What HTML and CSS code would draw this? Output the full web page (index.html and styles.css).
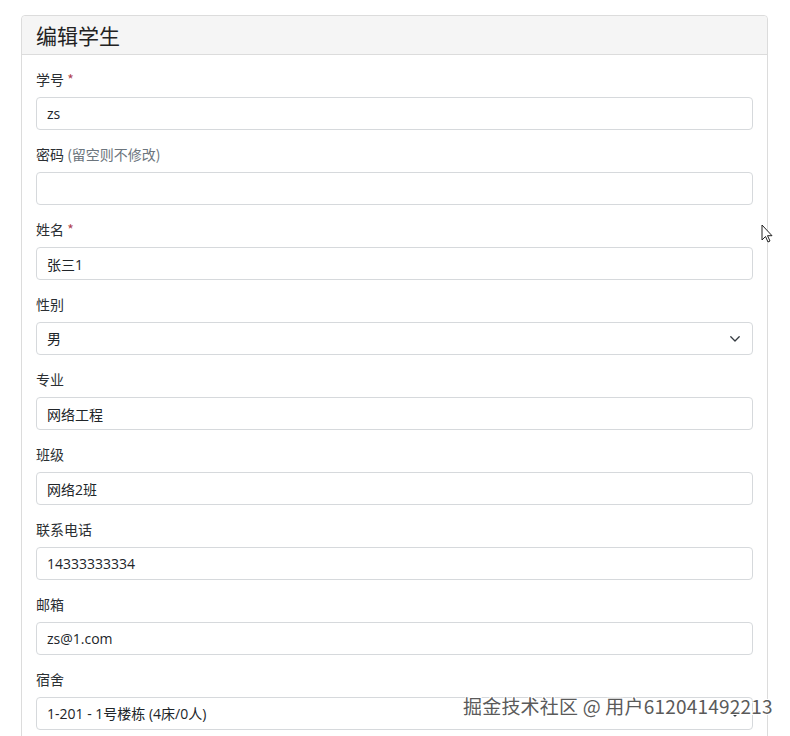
FILE: index.html
```html
<!DOCTYPE html>
<html lang="zh-CN">
<head>
<meta charset="utf-8">
<title>编辑学生</title>
<link rel="stylesheet" href="styles.css">
</head>
<body>
<div class="page">
  <div class="card">
    <div class="card-header"><h4 class="title">编辑学生</h4></div>
    <div class="card-body">
      <div class="group">
        <label class="label">学号 <span class="req">*</span></label>
        <input class="control" type="text" value="zs">
      </div>
      <div class="group">
        <label class="label">密码 <span class="muted">(留空则不修改)</span></label>
        <input class="control" type="password" value="">
      </div>
      <div class="group">
        <label class="label">姓名 <span class="req">*</span></label>
        <input class="control" type="text" value="张三1">
      </div>
      <div class="group">
        <label class="label">性别</label>
        <div class="select-wrap">
          <div class="control select">男</div>
          <svg class="chevron" viewBox="0 0 10 6" width="10" height="6"><path d="M0.8 0.8L5 5 9.2 0.8" fill="none" stroke="#343a40" stroke-width="1.3" stroke-linecap="round" stroke-linejoin="round"/></svg>
        </div>
      </div>
      <div class="group">
        <label class="label">专业</label>
        <input class="control" type="text" value="网络工程">
      </div>
      <div class="group">
        <label class="label">班级</label>
        <input class="control" type="text" value="网络2班">
      </div>
      <div class="group">
        <label class="label">联系电话</label>
        <input class="control" type="text" value="14333333334">
      </div>
      <div class="group">
        <label class="label">邮箱</label>
        <input class="control" type="text" value="zs@1.com">
      </div>
      <div class="group">
        <label class="label">宿舍</label>
        <div class="select-wrap">
          <div class="control select">1-201 - 1号楼栋 (4床/0人)</div>
          <svg class="chevron" viewBox="0 0 10 6" width="10" height="6"><path d="M0.8 0.8L5 5 9.2 0.8" fill="none" stroke="#343a40" stroke-width="1.3" stroke-linecap="round" stroke-linejoin="round"/></svg>
        </div>
      </div>
    </div>
  </div>
  <svg class="cursor" viewBox="0 0 12 19" width="12" height="19"><path d="M1 1v15l3.5-3.5 2.5 5.5 2-1-2.5-5.3H11z" fill="#fff" stroke="#222" stroke-width="1" stroke-linejoin="round"/></svg>
  <div class="watermark">掘金技术社区 @ 用户612041492213</div>
</div>
</body>
</html>
```
FILE: styles.css
```css
html, body {
  margin: 0;
  padding: 0;
  background: #fff;
}
body {
  font-family: "Segoe UI", "Open Sans", "Noto Sans CJK SC", sans-serif;
  font-size: 14px;
  color: #212529;
  overflow: hidden;
  height: 736px;
}
.page {
  position: relative;
  padding: 15px 0 0 21px;
  height: 721px;
}
.card {
  width: 745px;
  border: 1px solid #dcdcdc;
  border-radius: 4px;
  background: #fff;
}
.card-header {
  height: 38px;
  background: #f5f5f5;
  border-bottom: 1px solid #dcdcdc;
  border-radius: 4px 4px 0 0;
  padding: 0 14px;
  display: flex;
  align-items: center;
}
.title {
  margin: 0;
  font-size: 21px;
  font-weight: 400;
  color: #222;
  font-family: "Noto Sans CJK SC", sans-serif;
  line-height: 1;
}
.card-body {
  padding: 14px 14px 0 14px;
}
.group {
  margin-bottom: 14px;
}
.label {
  display: block;
  height: 21px;
  line-height: 21px;
  margin-bottom: 7px;
  font-family: "Noto Sans CJK SC", sans-serif;
  font-size: 14px;
  color: #2b2f33;
}
.req {
  color: #b0434f;
}
.muted {
  color: #6c757d;
}
.control {
  display: block;
  box-sizing: border-box;
  width: 717px;
  height: 33px;
  margin: 0;
  padding: 0 10px;
  border: 1px solid #d6d9dc;
  border-radius: 4px;
  background: #fff;
  font-family: "Segoe UI", "Open Sans", "Noto Sans CJK SC", sans-serif;
  font-size: 14px;
  color: #212529;
  outline: none;
}
.select {
  line-height: 31px;
}
.select-wrap {
  position: relative;
  width: 717px;
}
.chevron {
  position: absolute;
  right: 13px;
  top: 14px;
}
.cursor {
  position: absolute;
  left: 761px;
  top: 224px;
}
.watermark {
  position: absolute;
  left: 463px;
  top: 692px;
  font-family: "Noto Sans CJK SC", sans-serif;
  font-size: 19px;
  color: #5a5a5a;
  letter-spacing: 0.2px;
  white-space: nowrap;
  text-shadow: 1px 1px 0 #fff, -1px -1px 0 #fff, 1px -1px 0 #fff, -1px 1px 0 #fff;
}
```
